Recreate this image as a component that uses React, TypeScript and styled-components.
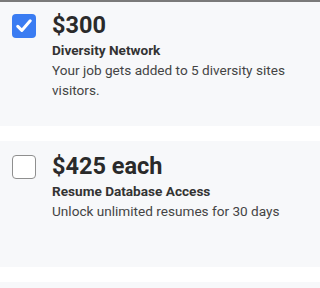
import React from 'react';
import styled, { createGlobalStyle } from 'styled-components';

interface Addon {
  price: string;
  title: string;
  description: string;
  checked: boolean;
}

const GlobalStyle = createGlobalStyle`
  html, body {
    margin: 0;
    padding: 0;
    background: #ffffff;
    overflow: hidden;
  }
  body {
    font-family: Roboto, "Liberation Sans", Arial, sans-serif;
    -webkit-font-smoothing: antialiased;
  }
`;

const Page = styled.div`
  width: 100%;
  height: 288px;
  overflow: hidden;
  background: #ffffff;
`;

const TopRule = styled.div`
  position: relative;
  z-index: 1;
  height: 2px;
  margin-bottom: -2px;
  background: #7a7a7a;
`;

const List = styled.div`
  display: flex;
  flex-direction: column;
  gap: 15px;
  margin-top: -1px;
`;

const Card = styled.label`
  display: flex;
  align-items: flex-start;
  gap: 16px;
  min-height: 126px;
  box-sizing: border-box;
  padding: 10px 0 0 12px;
  background: #f7f8fa;
  cursor: pointer;
`;

const Box = styled.span<{ $checked: boolean }>`
  flex: none;
  display: flex;
  align-items: center;
  justify-content: center;
  width: 24px;
  height: 24px;
  margin-top: 4px;
  box-sizing: border-box;
  border-radius: 4px;
  background: ${(p) => (p.$checked ? '#3a7cf2' : '#ffffff')};
  border: ${(p) => (p.$checked ? 'none' : '1.5px solid #8f8f8f')};
`;

const Body = styled.div`
  display: flex;
  flex-direction: column;
  width: 236px;
`;

const Price = styled.div`
  font-size: 23.5px;
  line-height: 30px;
  font-weight: 700;
  color: #2a2a2a;
`;

const Title = styled.div`
  font-size: 13.6px;
  line-height: 20px;
  font-weight: 700;
  color: #333333;
`;

const Description = styled.div`
  font-size: 13.6px;
  line-height: 20px;
  color: #444444;
`;

const addons: Addon[] = [
  {
    price: '$300',
    title: 'Diversity Network',
    description: 'Your job gets added to 5 diversity sites visitors.',
    checked: true,
  },
  {
    price: '$425 each',
    title: 'Resume Database Access',
    description: 'Unlock unlimited resumes for 30 days',
    checked: false,
  },
];

const Check = () => (
  <svg width="16" height="14" viewBox="0 0 16 14" fill="none">
    <path d="M1.8 7.4 L5.8 11.4 L14.2 1.8" stroke="#ffffff" strokeWidth="3" strokeLinecap="round" strokeLinejoin="round" />
  </svg>
);

const App: React.FC = () => {
  return (
    <Page>
      <GlobalStyle />
      <TopRule />
      <List>
        {addons.map((addon, index) => (
          <Card key={index}>
            <Box $checked={addon.checked}>{addon.checked && <Check />}</Box>
            <Body>
              <Price>{addon.price}</Price>
              <Title>{addon.title}</Title>
              <Description>{addon.description}</Description>
            </Body>
          </Card>
        ))}
        <Card />
      </List>
    </Page>
  );
};

export default App;
